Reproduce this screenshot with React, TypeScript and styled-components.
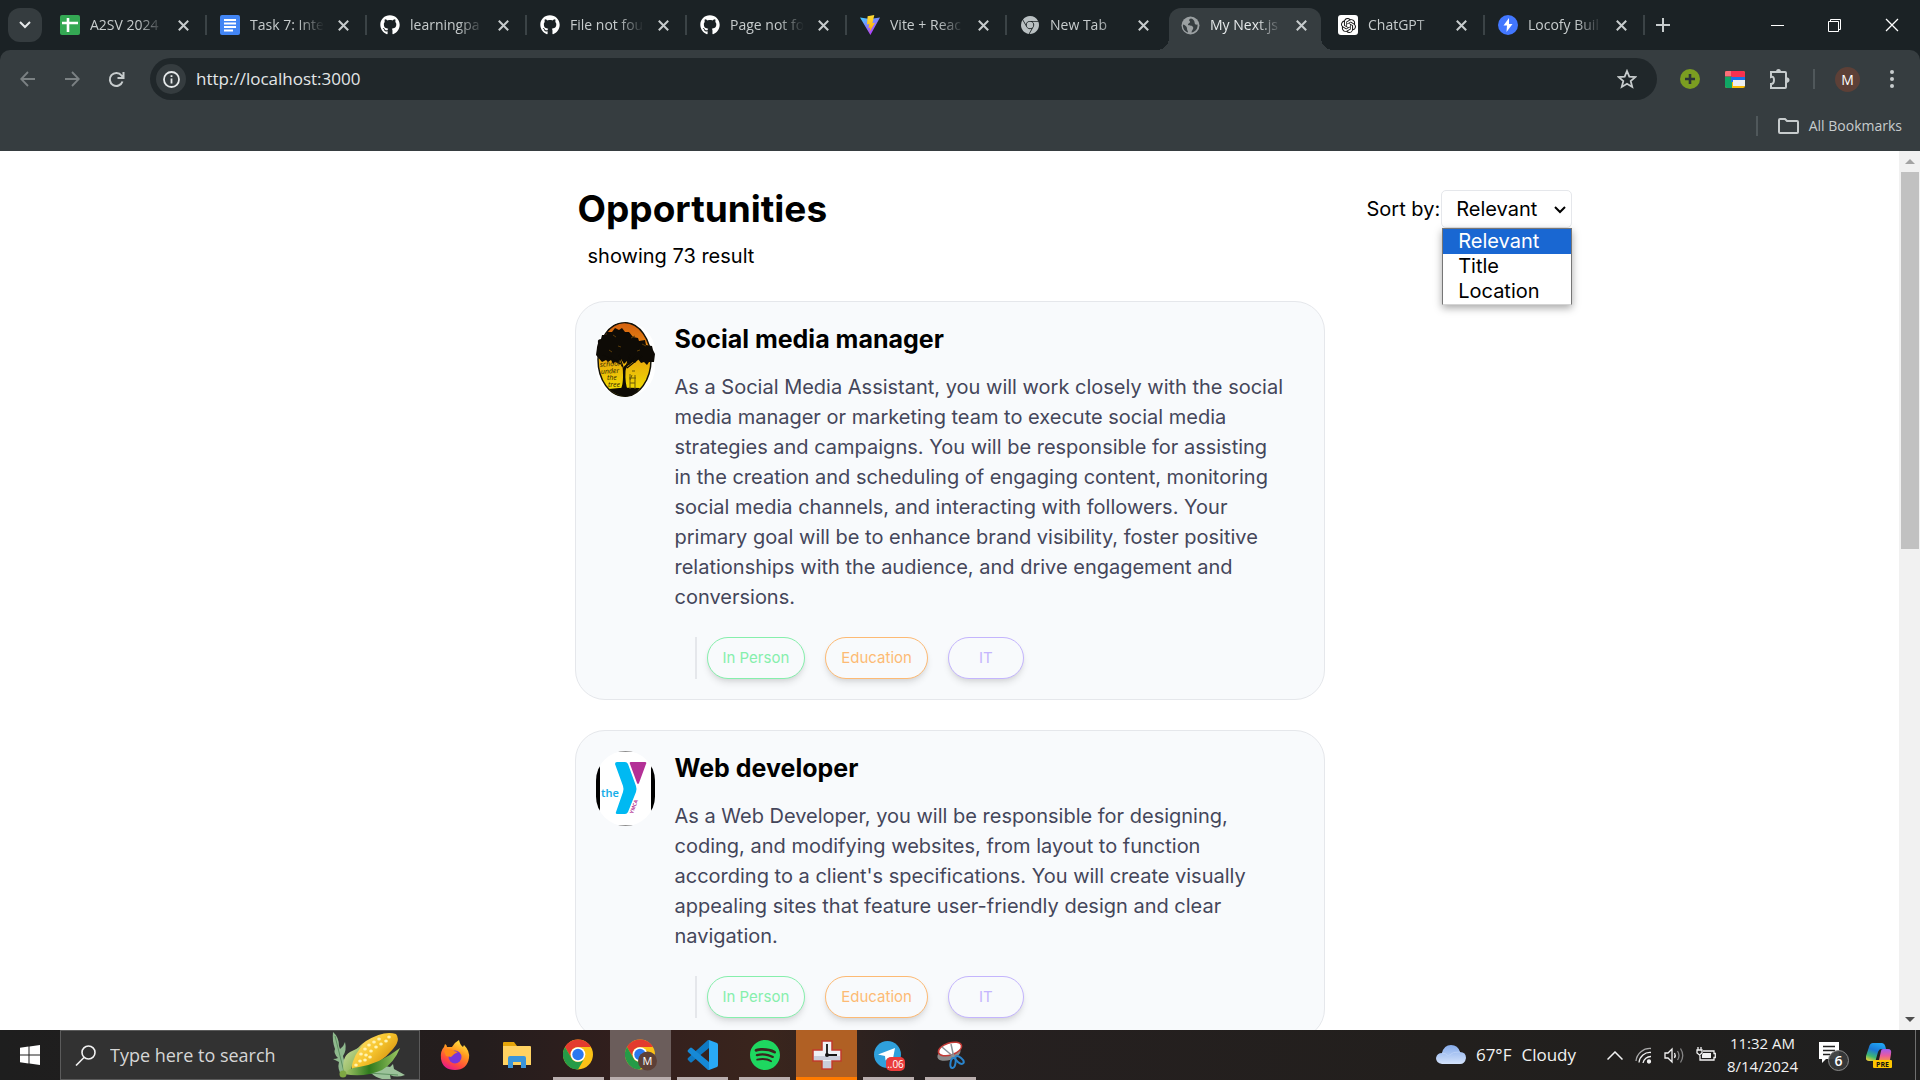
import React from "react";
import styled, { createGlobalStyle, css } from "styled-components";
import { FaGithub } from "react-icons/fa";
import { SiOpenai, SiGooglechrome, SiSpotify } from "react-icons/si";

const GlobalStyle = createGlobalStyle`
  *, *::before, *::after { box-sizing: border-box; }
  body { margin: 0; background: #fff; }
  button, input, select { font: inherit; color: inherit; }
  button { border: 0; padding: 0; background: none; cursor: pointer; }
  h1, h2, p, ul { margin: 0; padding: 0; }
  ul { list-style: none; }
  svg { display: block; flex: none; }
`;

const uiFont = `"Open Sans", "Noto Sans", sans-serif`;
const pageFont = `Inter, "Liberation Sans", sans-serif`;

const Desktop = styled.div`
  height: 100vh;
  display: flex;
  flex-direction: column;
  overflow: hidden;
`;

/* ---------- Browser chrome ---------- */

const BrowserHeader = styled.header`
  flex: none;
  background: #1b2225;
  color: #c7cccd;
  font-family: ${uiFont};
  font-size: 14px;
`;

const TabStrip = styled.div`
  height: 50px;
  display: flex;
  align-items: center;
  padding-left: 8px;
`;

const TabSearch = styled.button`
  width: 34px;
  height: 34px;
  flex: none;
  border-radius: 12px;
  background: #353c3f;
  display: grid;
  place-items: center;
  margin-right: 5px;
  color: #e6e9ea;
`;

const TabList = styled.div`
  flex: 1;
  max-width: 1598px;
  height: 50px;
  min-width: 0;
  display: flex;
`;

const Tab = styled.div<{ $active?: boolean; $line?: boolean }>`
  position: relative;
  flex: 0 1 ${(p) => (p.$active ? 158 : 160)}px;
  min-width: 0;
  height: 50px;
  display: flex;
  align-items: center;
  gap: 10px;
  padding: 0 15px 0 13px;

  ${(p) =>
    p.$line &&
    css`
      &::after {
        content: "";
        position: absolute;
        right: 0;
        top: 15px;
        width: 2px;
        height: 20px;
        background: #3b4346;
      }
    `}

  ${(p) =>
    p.$active &&
    css`
      color: #e6e9ea;
      &::before {
        content: "";
        position: absolute;
        inset: 8px 4px 0 2px;
        background: #363d40;
        border-radius: 12px 12px 0 0;
      }
      & > * {
        position: relative;
      }
    `}
`;

const TabFoot = styled.i<{ $side: "left" | "right" }>`
  && {
    position: absolute;
  }
  bottom: 0;
  ${(p) => (p.$side === "left" ? "left: -10px;" : "right: -8px;")}
  width: 12px;
  height: 12px;
  background: radial-gradient(
    circle at ${(p) => (p.$side === "left" ? "0 0" : "100% 0")},
    transparent 12px,
    #363d40 12px
  );
`;

const TabIcon = styled.span`
  width: 20px;
  height: 20px;
  flex: none;
  display: grid;
  place-items: center;
`;

const TabTitle = styled.span`
  flex: 1;
  min-width: 0;
  overflow: hidden;
  white-space: nowrap;
  line-height: 20px;
  mask-image: linear-gradient(90deg, #000 calc(100% - 26px), transparent);
`;

const IconButton = styled.button<{ $dim?: boolean }>`
  width: 34px;
  height: 34px;
  flex: none;
  display: grid;
  place-items: center;
  color: ${(p) => (p.$dim ? "#7b8183" : "#c7cccd")};
`;

const TabClose = styled(IconButton)`
  width: 18px;
`;

const NewTab = styled(IconButton)`
  margin-left: 1px;
`;

const WindowControls = styled.div`
  display: flex;
  margin-left: auto;
`;

const WindowButton = styled.button`
  width: 57px;
  height: 50px;
  display: grid;
  place-items: center;
  color: #fff;
`;

const Toolbar = styled.div`
  background: #363d40;
  border-radius: 10px 10px 0 0;
  height: 58px;
  display: flex;
  align-items: center;
  padding: 0 11px;
`;

const NavGroup = styled.div`
  display: flex;
  gap: 10px;
  margin-right: 17px;
`;

const Omnibox = styled.label`
  flex: 1;
  height: 42px;
  border-radius: 21px;
  background: #20272a;
  display: flex;
  align-items: center;
  padding: 0 13px 0 6px;
`;

const SiteInfo = styled.span`
  width: 30px;
  height: 30px;
  border-radius: 50%;
  background: #353c3f;
  display: grid;
  place-items: center;
  color: #e6e9ea;
`;

const Address = styled.input`
  flex: 1;
  min-width: 0;
  border: 0;
  outline: 0;
  background: none;
  padding: 0 10px;
  font-size: 17px;
  line-height: 24px;
  color: #e3e6e7;
`;

const Extensions = styled.div`
  display: flex;
  align-items: center;
  gap: 11px;
  margin-left: 16px;
`;

const Rule = styled.span`
  width: 2px;
  height: 20px;
  background: #50585b;
`;

const Avatar = styled.button`
  width: 25px;
  height: 25px;
  margin: 0 15px 0 20px;
  border-radius: 50%;
  background: #5d4037;
  color: #fff;
  font-size: 14px;
  line-height: 25px;
`;

const BookmarkBar = styled.div`
  background: #363d40;
  height: 43px;
  padding: 0 18px 7px 0;
  display: flex;
  justify-content: flex-end;
  align-items: center;
`;

const BookmarkButton = styled.button`
  display: flex;
  align-items: center;
  gap: 10px;
  margin-left: 20px;
  line-height: 20px;
`;

/* ---------- Web page ---------- */

const Viewport = styled.div`
  flex: 1;
  min-height: 0;
  display: flex;
  background: #fff;
`;

const Page = styled.main`
  flex: 1;
  min-width: 0;
  overflow: hidden;
  display: grid;
  grid-template-columns: 1fr minmax(0, 750px) 1fr;
  grid-template-rows: auto auto;
  align-content: start;
  font-family: ${pageFont};
  font-size: 20px;
  color: #000;
`;

const Heading = styled.div`
  grid-column: 2;
  padding: 33px 0 0 3px;
`;

const PageTitle = styled.h1`
  font-size: 37px;
  line-height: 50px;
  font-weight: 700;
`;

const ResultCount = styled.p`
  padding: 7px 10px;
  line-height: 30px;
`;

const SortField = styled.div`
  grid-column: 3;
  padding: 39px 0 0 42px;
  display: flex;
  align-items: flex-start;
  white-space: nowrap;
`;

const SortLabel = styled.label`
  line-height: 38px;
`;

const SelectWrap = styled.div`
  position: relative;
  width: 131px;
  margin-left: 1px;
`;

const Select = styled.select`
  appearance: none;
  display: block;
  width: 100%;
  height: 38px;
  border: 1px solid #e5e7eb;
  border-radius: 5px;
  background: #fff;
  padding: 0 0 0 14px;
  line-height: 30px;
`;

const SelectArrow = styled.svg`
  position: absolute;
  right: 5px;
  top: 15px;
  pointer-events: none;
`;

const Menu = styled.ul`
  position: absolute;
  top: 38px;
  left: 1px;
  right: 0;
  z-index: 1;
  border: 1px solid #767676;
  border-bottom-color: #d4d4d4;
  background: #fff;
  box-shadow: 0 3px 8px rgba(0, 0, 0, 0.35);
`;

const MenuItem = styled.li<{ $selected?: boolean }>`
  height: 25px;
  line-height: 25px;
  padding-left: 15px;
  background: ${(p) => (p.$selected ? "#1967d2" : "#fff")};
  color: ${(p) => (p.$selected ? "#fff" : "#000")};
`;

const CardList = styled.div`
  grid-column: 2;
  padding-top: 23px;
  display: flex;
  flex-direction: column;
  gap: 30px;
`;

const Card = styled.article`
  display: flex;
  gap: 20px;
  padding: 20px;
  border: 1px solid #e5e7eb;
  border-radius: 30px;
  background: #f8fafc;
`;

const CardLogo = styled.div`
  width: 59px;
  height: 75px;
  flex: none;
  border-radius: 30px;
  overflow: hidden;
`;

const CardBody = styled.div`
  flex: 1;
  min-width: 0;
`;

const CardTitle = styled.h2`
  font-size: 25px;
  line-height: 35px;
  font-weight: 700;
`;

const Description = styled.p`
  margin-top: 15px;
  padding-right: 15px;
  line-height: 30px;
  color: #44465a;
`;

const TagRow = styled.div`
  display: flex;
  gap: 20px;
  margin: 25px 0 0 20px;
  padding-left: 10px;
  border-left: 2px solid #e5e7eb;
`;

const Tag = styled.button<{ $color: string }>`
  height: 42px;
  min-width: 76px;
  padding: 0 15px;
  border: 1px solid ${(p) => p.$color};
  border-radius: 21px;
  background: #f8fafc;
  color: ${(p) => p.$color};
  font-size: 15px;
  line-height: 20px;
  box-shadow: 0 5px 7px -1px rgba(0, 0, 0, 0.1), 0 2px 5px -2px rgba(0, 0, 0, 0.1);
`;

const ScrollTrack = styled.div`
  width: 21px;
  flex: none;
  background: #f1f1f1;
  display: flex;
  flex-direction: column;
  align-items: center;
`;

const ScrollArrow = styled.button`
  width: 21px;
  height: 21px;
  display: grid;
  place-items: center;
`;

const ScrollLane = styled.div`
  flex: 1;
  width: 18px;
`;

const ScrollThumb = styled.div`
  height: 45%;
  background: #c1c1c1;
`;

/* ---------- Taskbar ---------- */

const Taskbar = styled.footer`
  flex: none;
  height: 50px;
  display: flex;
  align-items: stretch;
  font-family: ${uiFont};
  color: #f2f2f2;
  background: linear-gradient(90deg, #1e1e1e 0, #241d1d 25%, #331f1d 33%, #3a251d 40%, #262020 48%, #221f1d 75%, #1f1f1f 100%);
`;

const StartButton = styled.button`
  width: 60px;
  display: grid;
  place-items: center;
`;

const SearchBox = styled.label`
  width: 360px;
  background: #323232;
  border: 1px solid #5b5b5b;
  display: flex;
  align-items: center;
  padding: 0 13px 0 14px;
  gap: 14px;
`;

const SearchInput = styled.input`
  flex: 1;
  min-width: 0;
  border: 0;
  outline: 0;
  padding: 0;
  background: none;
  font-size: 18px;
  line-height: 26px;
  &::placeholder {
    color: #d6d6d6;
    opacity: 1;
  }
`;

const AppRow = styled.div`
  display: flex;
  gap: 1px;
  padding-left: 4px;
`;

const AppButton = styled.button<{ $state?: "open" | "active" | "alert" }>`
  position: relative;
  width: 61px;
  display: grid;
  place-items: center;
  background: ${(p) =>
    p.$state === "active" ? "#6b5d5b" : p.$state === "alert" ? "#b06024" : "transparent"};
  &::after {
    content: "";
    position: absolute;
    bottom: 0;
    height: 3px;
    inset-inline: ${(p) => (p.$state === "open" ? 5 : 0)}px;
    background: ${(p) =>
      p.$state === "alert" ? "#ff7b00" : p.$state ? "#b9aeae" : "transparent"};
  }
`;

const Tray = styled.div`
  margin-left: auto;
  display: flex;
  align-items: center;
  padding-right: 4px;
`;

const Weather = styled.button`
  display: flex;
  align-items: center;
  gap: 10px;
  margin-right: 31px;
  font-size: 17px;
  line-height: 26px;
  white-space: nowrap;
`;

const TrayIcons = styled.div`
  display: flex;
  align-items: center;
  gap: 12px;
`;

const Clock = styled.button`
  width: 93px;
  font-size: 15px;
  line-height: 23px;
  text-align: center;
`;

const TrayButton = styled.button`
  margin-left: 9px;
`;

const Copilot = styled.button`
  margin: 0 23px 0 16px;
`;

const ShowDesktop = styled.span`
  width: 1px;
  align-self: stretch;
  background: #6f6f6f;
`;

/* ---------- Drawings ---------- */

const Cross = ({ size = 11, width = 2 }: { size?: number; width?: number }) => (
  <svg width={size} height={size} viewBox="0 0 11 11" stroke="currentColor" strokeWidth={width}>
    <path d="M.8.8l9.4 9.4M10.2.8L.8 10.2" />
  </svg>
);

const SheetsIcon = () => (
  <svg width="20" height="20" viewBox="0 0 20 20">
    <rect width="20" height="20" rx="2" fill="#34a853" />
    <path d="M8 3v14M2 8h16" stroke="#fff" strokeWidth="2.6" />
  </svg>
);

const DocsIcon = () => (
  <svg width="20" height="20" viewBox="0 0 20 20">
    <rect width="20" height="20" rx="2" fill="#4285f4" />
    <path d="M4 5h12M4 8.500h12M4 12h12M4 15.500h9" stroke="#fff" strokeWidth="2" />
  </svg>
);

const ViteIcon = () => (
  <svg width="20" height="20" viewBox="0 0 20 20">
    <defs>
      <linearGradient id="vite-body" x1="0" y1="0" x2=".6" y2="1">
        <stop offset="0" stopColor="#41d1ff" />
        <stop offset="1" stopColor="#bd34fe" />
      </linearGradient>
      <linearGradient id="vite-bolt" x1="0" y1="0" x2="0" y2="1">
        <stop offset="0" stopColor="#ffdd35" />
        <stop offset="1" stopColor="#ffa800" />
      </linearGradient>
    </defs>
    <path d="M0 2.500l10 1.600 10-1.600L10.400 20z" fill="url(#vite-body)" />
    <path d="M14.300 0L7.600 1.200 7 9.400l2.400-.5-1 4.200 2-.6-.9 4.400L15 7.700l-2.600.5z" fill="url(#vite-bolt)" />
  </svg>
);

const GlobeIcon = () => (
  <svg width="19" height="19" viewBox="0 0 19 19">
    <circle cx="9.500" cy="9.500" r="9" fill="#9ba0a2" />
    <path d="M10 2.500c-2 .5-2.500 2-1 3 .5 1.500-2 1.500-2 3.500 2 1 4 0 5 2s-1 2.500-1.500 5.500c4-.5 6.500-4 6-8-2 .5-3-.5-3-2.500 0-1.500-1.500-3-3.500-3.500zM2 8.500c2 .5 4 2 4 4s1 2 1 4C3.500 15.500 1.500 12 2 8.500z" fill="#363d40" />
  </svg>
);

const ChatIcon = styled.span`
  width: 20px;
  height: 20px;
  border-radius: 3px;
  background: #fff;
  color: #111;
  display: grid;
  place-items: center;
`;

const LocofyIcon = () => (
  <svg width="20" height="20" viewBox="0 0 20 20">
    <circle cx="10" cy="10" r="10" fill="#4277ff" />
    <path d="M11 3L5.500 10.500H9L8.500 17l6-8H11z" fill="#fff" />
  </svg>
);

const ChromeIcon = ({ badge }: { badge?: string }) => (
  <svg width="32" height="32" viewBox="0 0 32 32">
    <circle cx="15" cy="15.500" r="15" fill="#fbc116" />
    <path d="M2 8A15 15 0 0 1 28 8H15a7.500 7.500 0 0 0-6.600 11.200z" fill="#e33b2e" />
    <path d="M2 8l6.500 11.200A7.500 7.500 0 0 0 21.500 19.200L15 30.500A15 15 0 0 1 2 8z" fill="#259b47" />
    <circle cx="15" cy="15.500" r="7.300" fill="#fff" />
    <circle cx="15" cy="15.500" r="5.700" fill="#2a78ee" />
    {badge && (
      <>
        <circle cx="22.500" cy="22" r="9.500" fill="#5d4037" />
        <text x="22.500" y="26" fontSize="11" fill="#fff" textAnchor="middle" fontFamily="Open Sans">
          {badge}
        </text>
      </>
    )}
  </svg>
);

const TreeLogo = () => (
  <svg width="59" height="75" viewBox="0 0 59 75" role="img" aria-label="School under the tree">
    <defs>
      <linearGradient id="tree-sky" x1="0" y1="0" x2="0" y2="1">
        <stop offset="0" stopColor="#d4600f" />
        <stop offset=".25" stopColor="#e07c12" />
        <stop offset=".5" stopColor="#e9a90d" />
        <stop offset="1" stopColor="#f2e600" />
      </linearGradient>
    </defs>
    <rect width="59" height="75" fill="#fff" />
    <ellipse cx="28.500" cy="37.500" rx="26.500" ry="37" fill="url(#tree-sky)" stroke="#15130a" strokeWidth="1.500" />
    <path
      d="M0 33l1-8 1-4-1-3 4-1 1-4 4 0 1-3 5 0 3-4 4 2 3-2 3 4 4 0 4 5 5 1 1 3 6-1 1 5 6 1 1 4 2 4-1 8-5 0-2 3-3-3-3 1-3-4-3 4-2-1-4 3-2-4-3 3-3-5-3 4-2-2-3 3-2-4-3 2-2-2-4 2z"
      fill="#0e0b06"
    />
    <path d="M17 13l3 2M35 16l4-2M46 22l4 2M22 24l3 1M13 28l3 2M41 29l3-1" stroke="#5a3c08" strokeWidth="1" />
    <path d="M13 34l11 8M46 34L31 46M34 33l-4 12M23 33l4 12M7 33l16 8M40 34l-8 9" stroke="#0e0b06" strokeWidth="1.200" />
    <path d="M22 38c5 4 5 8 5 16 0 7-1 11-3 15h8c-2-5-3-12-2.500-19 0-4 3-8 8-12l-8 5-3 3z" fill="#0e0b06" />
    <path d="M13 67q15-2 31-1-5 8-15.500 8.500Q19 73 13 67z" fill="#0e0b06" />
    <path d="M34 52v15M39 53v14M33 56h7M36 49h3M34 61h5M36 53l-2 5" stroke="#6b5908" strokeWidth="1" fill="none" />
    <g fontFamily="Open Sans" fontStyle="italic" fontSize="7" fill="#2c2404">
      <text x="4" y="45" transform="rotate(-4 4 45)">school</text>
      <text x="5" y="52" transform="rotate(-4 5 52)">under</text>
      <text x="11" y="58">the</text>
      <text x="12" y="65">tree</text>
    </g>
  </svg>
);

const YmcaLogo = () => (
  <svg width="59" height="75" viewBox="0 0 59 75" role="img" aria-label="the Y">
    <rect width="59" height="75" fill="#fff" />
    <path d="M0 14h3l1 3v41l-1 3H0zM59 14h-3l-1 3v41l1 3h3z" fill="#000" />
    <path d="M20 .5h19M20 74.500h19" stroke="#8d8d8d" />
    <path d="M19 13q0-2 2-2h8q2 0 3 2l8 22q1 3 0 6l-8 20q-1 2-3 2h-7q-3 0-2-2l7-20q1-3 0-6z" fill="#00b9f2" />
    <path d="M34 13q-1-2 1-2h14q2 0 1 2l-7 19q-1 2-2 0z" fill="#b33096" />
    <text x="5" y="46" fontSize="11" fontWeight="600" fontFamily="Noto Sans" fill="#18aee8">
      the
    </text>
    <text x="0" y="0" fontSize="5" fontWeight="700" fontFamily="Open Sans" fill="#b33096" transform="translate(37 63) rotate(-70)">
      YMCA
    </text>
  </svg>
);

const CornIcon = () => (
  <svg width="74" height="48" viewBox="0 0 74 48">
    <defs>
      <linearGradient id="corn" x1="0" y1="0" x2="1" y2=".8">
        <stop offset="0" stopColor="#ffe684" />
        <stop offset=".5" stopColor="#f7c62e" />
        <stop offset="1" stopColor="#c98205" />
      </linearGradient>
      <linearGradient id="husk" x1="0" y1="0" x2="1" y2="0">
        <stop offset="0" stopColor="#a9c96c" />
        <stop offset=".45" stopColor="#2f7a1e" />
        <stop offset="1" stopColor="#9cc763" />
      </linearGradient>
      <linearGradient id="husk-back" x1="0" y1="0" x2="1" y2="1">
        <stop offset="0" stopColor="#d5e3a8" />
        <stop offset="1" stopColor="#6fa23a" />
      </linearGradient>
    </defs>
    <path d="M1 1q6 5 6 14l1 3q4-3 5-7 2 8-2 14l3 12-4 8Q5 38 7 31l-6-3q3 0 5-1Q1 22 3 18q-3-8-2-17z" fill="#8fb98d" />
    <path d="M3 5l4 16 5 20" stroke="#5d9160" fill="none" />
    <path d="M33 41q12-6 20-6l5 1 3-3 1 5 11 6q-8 3-15 0l1 5q-13 0-20-7z" fill="#9cc29a" />
    <path d="M36 42l30 2" stroke="#5d9160" fill="none" />
    <path d="M20 38Q17 22 34 10 52-1 64 3q5 6-3 15Q48 34 26 41z" fill="url(#corn)" />
    <g fill="#fff3b0">
      {[[33, 18], [37, 14], [42, 11], [47, 8], [29, 23], [34, 24], [39, 20], [44, 16], [49, 13], [54, 10], [28, 30], [33, 29], [38, 26], [24, 34], [57, 6]].map(([x, y]) => (
        <ellipse key={`${x}-${y}`} cx={x} cy={y} rx="1.800" ry="1.500" />
      ))}
    </g>
    <path d="M12 42Q9 26 18 21q12-5 17-12-14 14-16 30l-2 4z" fill="url(#husk-back)" />
    <path d="M12 43q4-6 15-7 20-3 41-19-6 15-18 22-18 8-38 4z" fill="url(#husk)" />
    <circle cx="11" cy="43" r="3.500" fill="#7fa843" />
  </svg>
);

const FirefoxIcon = () => (
  <svg width="30" height="32" viewBox="0 0 30 32">
    <defs>
      <linearGradient id="fox" x1=".8" y1="0" x2=".3" y2="1">
        <stop offset="0" stopColor="#fff04a" />
        <stop offset=".4" stopColor="#ff9a1f" />
        <stop offset=".75" stopColor="#ff4a3d" />
        <stop offset="1" stopColor="#e5178f" />
      </linearGradient>
    </defs>
    <path d="M19 1q1 5 4 7l1-2q6 6 5 13-2 12-14 12T1 20Q0 12 4 8l1-3q2 1 2 3l5 0q3-5 7-7z" fill="url(#fox)" />
    <circle cx="15" cy="18" r="6.500" fill="#7a35d8" />
    <path d="M4 12q5-4 10 0l4 1q-5 2-7 5l-5-1z" fill="#ff8a16" />
  </svg>
);

const ExplorerIcon = () => (
  <svg width="30" height="30" viewBox="0 0 30 30">
    <path d="M1 3q0-1 1-1h10l3 4H1z" fill="#e5a50a" />
    <path d="M1 6h27q1 0 1 1v18H1z" fill="#ffd262" />
    <path d="M6 28V18q0-2 2-2h14q2 0 2 2v10h-5v-6h-8v6z" fill="#3a95da" />
  </svg>
);

const VsCodeIcon = () => (
  <svg width="32" height="32" viewBox="0 0 32 32">
    <path d="M22 1l8 3q1 .5 1 2v20q0 1.500-1 2l-8 3z" fill="#29a9f5" />
    <path d="M22 1v8L5 23q-1 1-2 0l-2-2q-1-1 0-2L21 1z" fill="#0f79c2" />
    <path d="M22 31v-8L5 9q-1-1-2 0l-2 2q-1 1 0 2l20 18z" fill="#1689d6" />
  </svg>
);

const ClockCrossIcon = () => (
  <svg width="30" height="30" viewBox="0 0 30 30">
    <path d="M10 1h10v9h9v11h-9v8H10v-8H1V10h9z" fill="#eef0f5" stroke="#c03a2c" strokeWidth="1.500" />
    <path d="M11 21h8v7h-8zM2 16h26v4H2z" fill="#c9cedb" />
    <path d="M15 4v11h10" stroke="#151515" strokeWidth="1.800" fill="none" />
    <circle cx="15" cy="15" r="2" fill="#151515" />
  </svg>
);

const TelegramIcon = () => (
  <svg width="32" height="32" viewBox="0 0 32 32">
    <circle cx="14.500" cy="15.500" r="13.500" fill="#2fa0dc" />
    <path d="M5 15.500L22 9l-2.500 13-4.500-3-2.500 2.500-.5-4.500z" fill="#fff" />
    <rect x="13" y="18" width="19" height="14" rx="5" fill="#ea3c3c" />
    <text x="22.500" y="29" fontSize="10" fill="#fff" textAnchor="middle" fontFamily="Open Sans">
      ..06
    </text>
  </svg>
);

const SnipIcon = () => (
  <svg width="30" height="30" viewBox="0 0 30 30">
    <ellipse cx="13" cy="14" rx="12" ry="6" fill="#8a8a8a" transform="rotate(-18 13 14)" />
    <ellipse cx="14" cy="9" rx="12" ry="6" fill="#fff" stroke="#c33a36" strokeWidth="1.500" transform="rotate(-18 14 9)" />
    <path d="M6 7l13 11M15 4l3 14" stroke="#8b9298" strokeWidth="1.500" />
    <ellipse cx="17" cy="23" rx="2.500" ry="5" fill="none" stroke="#2a84cc" strokeWidth="2" transform="rotate(10 17 23)" />
    <ellipse cx="23.500" cy="20" rx="2.500" ry="5" fill="none" stroke="#2a84cc" strokeWidth="2" transform="rotate(-50 23.500 20)" />
  </svg>
);

const CloudIcon = () => (
  <svg width="30" height="20" viewBox="0 0 30 20">
    <defs>
      <linearGradient id="cloud" x1="0" y1="0" x2="0" y2="1">
        <stop offset="0" stopColor="#86abea" />
        <stop offset="1" stopColor="#d3e2fb" />
      </linearGradient>
    </defs>
    <path d="M6 19q-6-1-6-6 1-5 6-5Q8 0 15 0t9 7q6 0 6 6-1 6-6 6z" fill="url(#cloud)" />
    <path d="M6 8q4 0 6 3 5-5 12-4" fill="none" stroke="#b9d0f7" />
  </svg>
);

const CopilotIcon = () => (
  <svg width="26" height="25" viewBox="0 0 26 25">
    <defs>
      <linearGradient id="pilot-l" x1=".6" y1="0" x2=".2" y2="1">
        <stop offset="0" stopColor="#1fa2f2" />
        <stop offset=".4" stopColor="#1b78d8" />
        <stop offset=".75" stopColor="#3fb871" />
        <stop offset="1" stopColor="#e6cf3a" />
      </linearGradient>
      <linearGradient id="pilot-r" x1=".5" y1="0" x2=".5" y2="1">
        <stop offset="0" stopColor="#a25cf0" />
        <stop offset=".6" stopColor="#ea5a9e" />
        <stop offset="1" stopColor="#f58a55" />
      </linearGradient>
    </defs>
    <path d="M7 0h9q3 0 4 6h-5q-2 0-3 3l-2 7q0 2-3 2H3q-4 0-3-5L3 4q1-4 4-4z" fill="url(#pilot-l)" />
    <path d="M17 6h5q4 0 3 5l-1 6H13l2-9q0-2 2-2z" fill="url(#pilot-r)" />
    <rect x="7" y="17" width="19" height="8" rx="1" fill="#fdc500" />
    <text x="16.500" y="24" fontSize="7" fontWeight="700" textAnchor="middle" fill="#111" fontFamily="Open Sans">
      PRE
    </text>
  </svg>
);

/* ---------- Data ---------- */

const tabs = [
  { title: "A2SV 2024", icon: <SheetsIcon /> },
  { title: "Task 7: Inte", icon: <DocsIcon /> },
  { title: "learningpa", icon: <FaGithub size={20} color="#fff" /> },
  { title: "File not fou", icon: <FaGithub size={20} color="#fff" /> },
  { title: "Page not fo", icon: <FaGithub size={20} color="#fff" /> },
  { title: "Vite + Reac", icon: <ViteIcon /> },
  { title: "New Tab", icon: <SiGooglechrome size={18} color="#b9c0c2" /> },
  { title: "My Next.js", icon: <GlobeIcon />, active: true },
  { title: "ChatGPT", icon: <ChatIcon><SiOpenai size={15} /></ChatIcon> },
  { title: "Locofy Buil", icon: <LocofyIcon /> },
];

const tags = [
  { name: "In Person", color: "#86efac" },
  { name: "Education", color: "#fdba74" },
  { name: "IT", color: "#c4b5fd" },
];

const jobs = [
  {
    title: "Social media manager",
    logo: <TreeLogo />,
    text: "As a Social Media Assistant, you will work closely with the social media manager or marketing team to execute social media strategies and campaigns. You will be responsible for assisting in the creation and scheduling of engaging content, monitoring social media channels, and interacting with followers. Your primary goal will be to enhance brand visibility, foster positive relationships with the audience, and drive engagement and conversions.",
  },
  {
    title: "Web developer",
    logo: <YmcaLogo />,
    text: "As a Web Developer, you will be responsible for designing, coding, and modifying websites, from layout to function according to a client's specifications. You will create visually appealing sites that feature user-friendly design and clear navigation.",
  },
];

const sortOptions = ["Relevant", "Title", "Location"];

/* ---------- Sections ---------- */

const Browser = () => (
  <BrowserHeader>
    <TabStrip>
      <TabSearch aria-label="Search tabs">
        <svg width="12" height="8" viewBox="0 0 12 8" fill="none" stroke="currentColor" strokeWidth="2">
          <path d="M1 1l5 5 5-5" />
        </svg>
      </TabSearch>
      <TabList>
        {tabs.map((tab, i) => (
          <Tab key={i} $active={tab.active} $line={!tab.active && !tabs[i + 1]?.active}>
            {tab.active && <TabFoot $side="left" />}
            {tab.active && <TabFoot $side="right" />}
            <TabIcon>{tab.icon}</TabIcon>
            <TabTitle>{tab.title}</TabTitle>
            <TabClose aria-label="Close tab">
              <Cross />
            </TabClose>
          </Tab>
        ))}
      </TabList>
      <NewTab aria-label="New tab">
        <svg width="14" height="14" viewBox="0 0 14 14" stroke="currentColor" strokeWidth="2">
          <path d="M7 0v14M0 7h14" />
        </svg>
      </NewTab>
      <WindowControls>
        <WindowButton aria-label="Minimize">
          <svg width="13" height="13" viewBox="0 0 13 13" stroke="currentColor">
            <path d="M0 6.500h13" />
          </svg>
        </WindowButton>
        <WindowButton aria-label="Restore">
          <svg width="13" height="13" viewBox="0 0 13 13" fill="none" stroke="currentColor">
            <path d="M.5 2.500h10v10H.5zM2.500 2.500v-2h10v10h-2" />
          </svg>
        </WindowButton>
        <WindowButton aria-label="Close">
          <Cross size={14} width={1} />
        </WindowButton>
      </WindowControls>
    </TabStrip>
    <Toolbar>
      <NavGroup>
        <IconButton $dim aria-label="Back">
          <svg width="16" height="16" viewBox="0 0 16 16" fill="none" stroke="currentColor" strokeWidth="1.800">
            <path d="M15 8H1.500M8 1L1.200 8 8 15" />
          </svg>
        </IconButton>
        <IconButton $dim aria-label="Forward">
          <svg width="16" height="16" viewBox="0 0 16 16" fill="none" stroke="currentColor" strokeWidth="1.800">
            <path d="M1 8h13.500M8 1l6.800 7L8 15" />
          </svg>
        </IconButton>
        <IconButton aria-label="Reload">
          <svg width="17" height="17" viewBox="0 0 17 17" fill="none" stroke="currentColor" strokeWidth="2">
            <path d="M14.500 10.500A6.500 6.500 0 1 1 13.500 4.500L15 6.500M15.500 1v6h-6" />
          </svg>
        </IconButton>
      </NavGroup>
      <Omnibox>
        <SiteInfo>
          <svg width="17" height="17" viewBox="0 0 17 17" fill="none" stroke="currentColor" strokeWidth="1.800">
            <circle cx="8.500" cy="8.500" r="7.500" />
            <path d="M8.500 7.500v5M8.500 4.300v1.800" />
          </svg>
        </SiteInfo>
        <Address aria-label="Address and search bar" defaultValue="http://localhost:3000" />
        <IconButton as="span">
          <svg width="20" height="20" viewBox="0 0 20 20" fill="none" stroke="currentColor" strokeWidth="1.800">
            <path d="M10 2l2.300 5.600 6 .5-4.600 3.900 1.500 5.900L10 14.700l-5.200 3.200L6.300 12 1.700 8.100l6-.5z" />
          </svg>
        </IconButton>
      </Omnibox>
      <Extensions>
        <IconButton aria-label="Add extension">
          <svg width="20" height="20" viewBox="0 0 20 20">
            <circle cx="10" cy="10" r="10" fill="#7b9d21" />
            <path d="M10 5v10M5 10h10" stroke="#2c3438" strokeWidth="2.600" />
          </svg>
        </IconButton>
        <IconButton aria-label="Web store">
          <svg width="20" height="17" viewBox="0 0 20 17">
            <rect width="20" height="17" rx="2" fill="#fbbc04" />
            <path d="M2 0h16q2 0 2 2v4H0V2q0-2 2-2z" fill="#f8314f" />
            <path d="M0 2q0-2 2-2h4v5H0z" fill="#fb6f79" />
            <path d="M0 5.500h7V17H2q-2 0-2-2z" fill="#10a765" />
            <path d="M6 6h14v5H6z" fill="#1a73e8" />
            <path d="M8 9h12v6H8z" fill="#eceef2" />
          </svg>
        </IconButton>
        <IconButton aria-label="Extensions">
          <svg width="22" height="22" viewBox="0 0 22 22" fill="none" stroke="currentColor" strokeWidth="2">
            <path d="M2 4h14q1 0 1 1v14q0 1-1 1H2v-4q3 0 3-4t-3-3z" />
            <path d="M7 4q0-3 2.500-3T12 4zM17 9q3.500.5 3.500 3T17 15z" fill="currentColor" stroke="none" />
          </svg>
        </IconButton>
      </Extensions>
      <Extensions>
        <Rule />
      </Extensions>
      <Avatar aria-label="Profile">M</Avatar>
      <IconButton aria-label="Menu">
        <svg width="4" height="18" viewBox="0 0 4 18" fill="currentColor">
          <circle cx="2" cy="2" r="2" />
          <circle cx="2" cy="9" r="2" />
          <circle cx="2" cy="16" r="2" />
        </svg>
      </IconButton>
    </Toolbar>
    <BookmarkBar>
      <Rule />
      <BookmarkButton>
        <svg width="21" height="16" viewBox="0 0 21 16" fill="none" stroke="currentColor" strokeWidth="2">
          <path d="M1 14V2q0-1 1-1h5l2 2h10q1 0 1 1v10q0 1-1 1H2q-1 0-1-1z" />
        </svg>
        All Bookmarks
      </BookmarkButton>
    </BookmarkBar>
  </BrowserHeader>
);

const Opportunities = () => (
  <Page>
    <Heading>
      <PageTitle>Opportunities</PageTitle>
      <ResultCount>showing 73 result</ResultCount>
    </Heading>
    <SortField>
      <SortLabel htmlFor="sort">Sort by:</SortLabel>
      <SelectWrap>
        <Select id="sort" defaultValue="Relevant">
          {sortOptions.map((o) => (
            <option key={o}>{o}</option>
          ))}
        </Select>
        <SelectArrow width="14" height="9" viewBox="0 0 14 9" fill="none" stroke="#000" strokeWidth="2">
          <path d="M2 2l5 5 5-5" />
        </SelectArrow>
        <Menu role="listbox" aria-label="Sort by">
          {sortOptions.map((o, i) => (
            <MenuItem key={o} role="option" aria-selected={i === 0} $selected={i === 0}>
              {o}
            </MenuItem>
          ))}
        </Menu>
      </SelectWrap>
    </SortField>
    <CardList>
      {jobs.map((job) => (
        <Card key={job.title}>
          <CardLogo>{job.logo}</CardLogo>
          <CardBody>
            <CardTitle>{job.title}</CardTitle>
            <Description>{job.text}</Description>
            <TagRow>
              {tags.map((t) => (
                <Tag key={t.name} $color={t.color}>
                  {t.name}
                </Tag>
              ))}
            </TagRow>
          </CardBody>
        </Card>
      ))}
    </CardList>
  </Page>
);

const Scrollbar = () => (
  <ScrollTrack>
    <ScrollArrow aria-label="Scroll up">
      <svg width="10" height="5" viewBox="0 0 10 5" fill="#a3a3a3">
        <path d="M0 5l5-5 5 5z" />
      </svg>
    </ScrollArrow>
    <ScrollLane>
      <ScrollThumb />
    </ScrollLane>
    <ScrollArrow aria-label="Scroll down">
      <svg width="10" height="5" viewBox="0 0 10 5" fill="#505050">
        <path d="M0 0l5 5 5-5z" />
      </svg>
    </ScrollArrow>
  </ScrollTrack>
);

const SystemTaskbar = () => (
  <Taskbar>
    <StartButton aria-label="Start">
      <svg width="20" height="20" viewBox="0 0 20 20" fill="#fff">
        <path d="M0 2.800L8.500 1.600v8H0zM9.500 1.400L20 0v9.600H9.500zM0 10.500h8.500v8L0 17.300zM9.500 10.500H20V20L9.500 18.600z" />
      </svg>
    </StartButton>
    <SearchBox>
      <svg width="21" height="21" viewBox="0 0 21 21" fill="none" stroke="#f2f2f2" strokeWidth="1.600">
        <circle cx="13.500" cy="7.500" r="6.500" />
        <path d="M9 12.500L1 20.500" />
      </svg>
      <SearchInput placeholder="Type here to search" aria-label="Type here to search" />
      <CornIcon />
    </SearchBox>
    <AppRow>
      <AppButton aria-label="Firefox">
        <FirefoxIcon />
      </AppButton>
      <AppButton aria-label="File Explorer">
        <ExplorerIcon />
      </AppButton>
      <AppButton $state="open" aria-label="Chrome">
        <ChromeIcon />
      </AppButton>
      <AppButton $state="active" aria-label="Chrome, second profile">
        <ChromeIcon badge="M" />
      </AppButton>
      <AppButton $state="open" aria-label="Visual Studio Code">
        <VsCodeIcon />
      </AppButton>
      <AppButton $state="open" aria-label="Spotify">
        <SiSpotify size={30} color="#1ed760" />
      </AppButton>
      <AppButton $state="alert" aria-label="Timer">
        <ClockCrossIcon />
      </AppButton>
      <AppButton $state="open" aria-label="Telegram">
        <TelegramIcon />
      </AppButton>
      <AppButton $state="open" aria-label="Snipping Tool">
        <SnipIcon />
      </AppButton>
    </AppRow>
    <Tray>
      <Weather>
        <CloudIcon />
        <span>67°F</span>
        <span>Cloudy</span>
      </Weather>
      <TrayIcons>
        <svg width="16" height="9" viewBox="0 0 16 9" fill="none" stroke="#f2f2f2" strokeWidth="1.500">
          <path d="M.5 8.500L8 1l7.500 7.500" />
        </svg>
        <svg width="17" height="17" viewBox="0 0 17 17" fill="none" stroke="#f2f2f2" strokeWidth="1.300">
          <path d="M1 14A14 14 0 0 1 16 1.500" stroke="#a9a9a9" />
          <path d="M4 15.500A11 11 0 0 1 16 5.500M8 16A8 8 0 0 1 16 9.500" />
          <circle cx="14" cy="14.500" r="1.500" fill="#f2f2f2" />
        </svg>
        <svg width="20" height="17" viewBox="0 0 20 17" fill="none" stroke="#f2f2f2" strokeWidth="1.300">
          <path d="M1 6h3l4-4v13l-4-4H1zM10.500 6q1.500 2.500 0 5" />
          <path d="M13.500 4q3 4.500 0 9M16.500 1.500q4.500 7 0 14" stroke="#858585" />
        </svg>
        <svg width="20" height="16" viewBox="0 0 20 16" fill="none" stroke="#f2f2f2" strokeWidth="1.300">
          <path d="M7 4h11v2.500h1.300v4H18V13H4V8.500M1 3h5v3L3.500 8 1 6zM2 0v3M5 0v3" />
          <path d="M7 6h8v5H6V7.500z" fill="#f2f2f2" stroke="none" />
        </svg>
      </TrayIcons>
      <Clock>
        11:32 AM
        <br />
        8/14/2024
      </Clock>
      <TrayButton aria-label="6 new notifications">
        <svg width="32" height="32" viewBox="0 0 32 32">
          <path d="M1 3h20v17H8l-4 4v-4H1z" fill="#fff" />
          <path d="M5 7.500h12M5 11.500h12M5 15.500h7" stroke="#222" strokeWidth="1.400" />
          <circle cx="20.500" cy="21.500" r="10" fill="#37393a" fillOpacity=".94" stroke="#8a8a8a" />
          <text x="20.500" y="26.500" fontSize="14" fontWeight="600" fill="#fff" textAnchor="middle" fontFamily="Open Sans">
            6
          </text>
        </svg>
      </TrayButton>
      <Copilot aria-label="Copilot">
        <CopilotIcon />
      </Copilot>
      <ShowDesktop />
    </Tray>
  </Taskbar>
);

export default function App() {
  return (
    <Desktop>
      <GlobalStyle />
      <Browser />
      <Viewport>
        <Opportunities />
        <Scrollbar />
      </Viewport>
      <SystemTaskbar />
    </Desktop>
  );
}
